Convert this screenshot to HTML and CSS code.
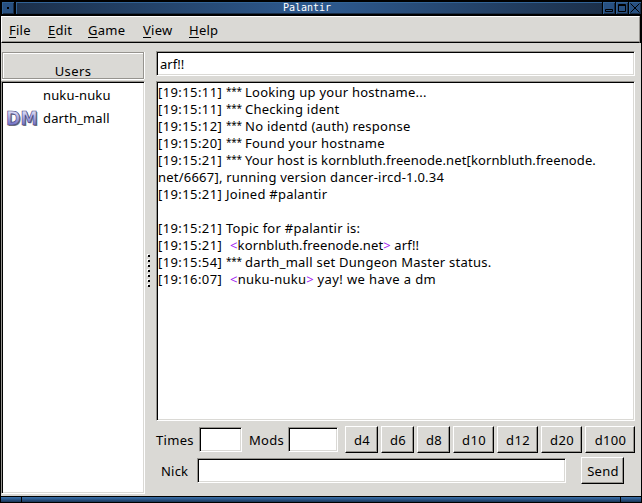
FILE: index.html
```
<!DOCTYPE html>
<html lang="en">
<head>
<meta charset="utf-8">
<title>Palantir</title>
<link rel="stylesheet" href="styles.css">
</head>
<body>
<div class="window">
  <header class="titlebar">
    <span class="tbtn"><svg width="12" height="12"><path d="M5 5h2v2h-2z"/></svg></span>
    <span class="title">Palantir</span>
    <span class="tbtn"><svg width="12" height="12"><path d="M2.5 7.5h7v2h-7z" fill="none" stroke="#000"/></svg></span>
    <span class="tbtn"><svg width="12" height="12"><path d="M2.5 2.5h7v7h-7zM2 3.5h8" fill="none" stroke="#000"/></svg></span>
    <span class="tbtn"><svg width="12" height="12"><path d="M1.5 1.5l9 9M10.5 1.5l-9 9" fill="none" stroke="#000"/></svg></span>
  </header>
  <nav class="menubar">
    <span class="m-file"><u>F</u>ile</span><span class="m-edit"><u>E</u>dit</span><span class="m-game"><u>G</u>ame</span><span class="m-view"><u>V</u>iew</span><span class="m-help"><u>H</u>elp</span>
  </nav>
  <main class="body">
    <aside class="side">
      <div class="head"><span>Users</span></div>
      <div class="list sunken">
        <div class="user"><span class="icon"></span><span class="nuku">nuku-nuku</span></div>
        <div class="user"><span class="icon"><svg width="36" height="22" viewBox="0 0 36 22">
          <defs><linearGradient id="g" x1="0" y1="0" x2="0" y2="1"><stop offset="0.2" stop-color="#e0e0f8"/><stop offset="0.85" stop-color="#6464c0"/></linearGradient></defs>
          <text class="dm shade" x="2" y="18" textLength="32" lengthAdjust="spacingAndGlyphs">DM</text>
          <text class="dm face" x="1" y="17" textLength="32" lengthAdjust="spacingAndGlyphs" fill="url(#g)">DM</text></svg></span><span class="darth">darth_mall</span></div>
      </div>
    </aside>
    <div class="grip"><i></i><i></i><i></i><i></i><i></i><i></i><i></i></div>
    <section class="chat">
      <div class="sunken topic"><span>arf!!</span></div>
      <div class="sunken log">
        <p><time>[19:15:11]</time><s>***</s><span>Looking up your hostname...</span></p>
        <p><time>[19:15:11]</time><s>***</s><span>Checking ident</span></p>
        <p><time>[19:15:12]</time><s>***</s><span>No identd (auth) response</span></p>
        <p><time>[19:15:20]</time><s>***</s><span>Found your hostname</span></p>
        <p><time>[19:15:21]</time><s>***</s><span class="host">Your host is kornbluth.freenode.net[kornbluth.freenode.</span></p>
        <p><span class="version">net/6667], running version dancer-ircd-1.0.34</span></p>
        <p><time>[19:15:21]</time><span>Joined #palantir</span></p>
        <p></p>
        <p><time>[19:15:21]</time><span>Topic for #palantir is:</span></p>
        <p><time>[19:15:21]</time><span class="said server"><b>&lt;</b>kornbluth.freenode.net<b>&gt;</b> arf!!</span></p>
        <p><time>[19:15:54]</time><s>***</s><span>darth_mall set Dungeon Master status.</span></p>
        <p><time>[19:16:07]</time><span class="said"><b>&lt;</b>nuku-nuku<b>&gt;</b> <span class="yay">yay! we have a dm</span></span></p>
      </div>
      <div class="dice">
        <label class="times">Times</label><div class="sunken w43"></div>
        <label class="mods">Mods</label><div class="sunken w50"></div>
        <div class="buttons"><button>d4</button><button>d6</button><button>d8</button><button class="mid">d10</button><button class="mid">d12</button><button class="mid">d20</button><button class="big">d100</button></div>
      </div>
      <div class="nickrow"><label class="nick">Nick</label><div class="sunken nickfield"></div><button class="send">Send</button></div>
    </section>
  </main>
  <footer class="resize"><i></i><i class="long"></i><i></i></footer>
</div>
</body>
</html>
```

FILE: styles.css
```
* { box-sizing: border-box; }
body { margin: 0; background: #000; overflow: hidden; font: 13px/17px "Noto Sans", "Open Sans", sans-serif; color: #000; }
.window { width: 642px; height: 503px; display: flex; flex-direction: column; padding: 0 1px; white-space: nowrap; }
.titlebar { display: flex; height: 16px; padding: 2px 0 2px 1px; gap: 1px; }
.tbtn, .title { height: 12px; box-shadow: inset 1px 1px #316295, inset -1px -1px #172b44; }
.tbtn { width: 12px; background: #285080; }
.tbtn svg { display: block; }
.title { flex: 1; margin-left: 1px; background: linear-gradient(90deg, #1c304a, #2c578b 48%, #2c578b 55%, #1c304a); color: #fff; font: 10px/12px "DejaVu Sans Mono", monospace; text-align: center; padding-right: 4px; }
.menubar { display: flex; height: 27px; width: 639px; background: #dad9d5; border-top: 1px solid #fff; border-left: 1px solid #fff; border-right: 1px solid #96948f; border-bottom: 1px solid #000; box-shadow: inset 0 -1px #96948f; padding: 5px 0 0 7px; letter-spacing: .25px; }
.menubar u { text-decoration-thickness: 1px; text-underline-offset: 2px; }
.menubar span { width: 39px; }
.menubar .m-edit { width: 40px; }
.menubar .m-game { width: 55px; }
.menubar .m-view { width: 46px; }
.body { display: flex; height: 453px; background: #dad9d5; }
.side { width: 144px; padding-top: 9px; }
.head { height: 27px; margin-left: 1px; margin-right: 1px; border: 1px solid #96948f; box-shadow: inset 1px 1px #fff, 0 1px #fff, 1px 0 #fff; text-align: center; padding-top: 10px; letter-spacing: .4px; }
.sunken { background: #fff; border: 1px solid; border-color: #96948f #fff #fff #96948f; box-shadow: inset 1px 1px #000, inset -1px -1px #dad9d5; }
.list { height: 413px; margin-top: 2px; padding-top: 2px; }
.user { display: flex; align-items: center; height: 23px; letter-spacing: .15px; }
.icon { width: 41px; padding-left: 3px; }
.icon svg { display: block; }
.dm { font: bold 20px "DejaVu Sans", sans-serif; }
.shade { fill: #777; }
.face { stroke: #454585; stroke-width: .7px; }
.grip { width: 11px; padding: 212px 0 0 2px; }
.grip i { display: block; width: 2px; height: 2px; margin: 0 0 3px 1px; background: #000; box-shadow: -1px -1px #fff; }
.chat { width: 480px; padding-top: 8px; }
.topic { width: 479px; height: 25px; padding: 4px 3px 2px; }
.log { width: 479px; height: 340px; margin-top: 5px; padding: 2px 0 0 1px; letter-spacing: .25px; }
.log p { margin: 0; height: 17px; display: flex; }
.log time { width: 68px; letter-spacing: .4px; }
.log s { width: 19px; text-decoration: none; font-size: 10px; line-height: 15px; letter-spacing: -.2px; }
.log .host { letter-spacing: .12px; }
.log .version { letter-spacing: .22px; }
.log b { font-weight: normal; color: #a020f0; }
.said { margin-left: 4px; }
.log .server { letter-spacing: .13px; }
.yay { letter-spacing: .4px; }
.dice { display: flex; height: 27px; margin-top: 5px; align-items: center; letter-spacing: .3px; }
.times { width: 43px; padding-top: 1px; }
.w43 { width: 43px; height: 25px; }
.mods { width: 39px; margin-left: 7px; padding-top: 1px; }
.w50 { width: 50px; height: 25px; }
.buttons { display: flex; gap: 3px; margin-left: 7px; }
button { width: 33px; height: 27px; padding: 1px 0 0 1px; border: 1px solid; border-color: #fff #000 #000 #fff; box-shadow: inset -1px -1px #96948f; background: #dad9d5; font: inherit; color: #000; letter-spacing: .3px; }
.mid { width: 41px; }
.big { width: 50px; }
.nickrow { display: flex; height: 27px; align-items: center; margin-top: 4px; letter-spacing: .2px; }
.nick { width: 41px; padding: 1px 0 0 5px; }
.nickfield { width: 369px; height: 25px; }
.send { width: 43px; margin-left: 15px; }
.resize { display: flex; gap: 1px; height: 7px; padding: 1px 0; }
.resize i { width: 20px; height: 5px; background: linear-gradient(#3d72a8, #2c5a8e 40%, #1b3656); }
.resize .long { flex: 1; }
```
